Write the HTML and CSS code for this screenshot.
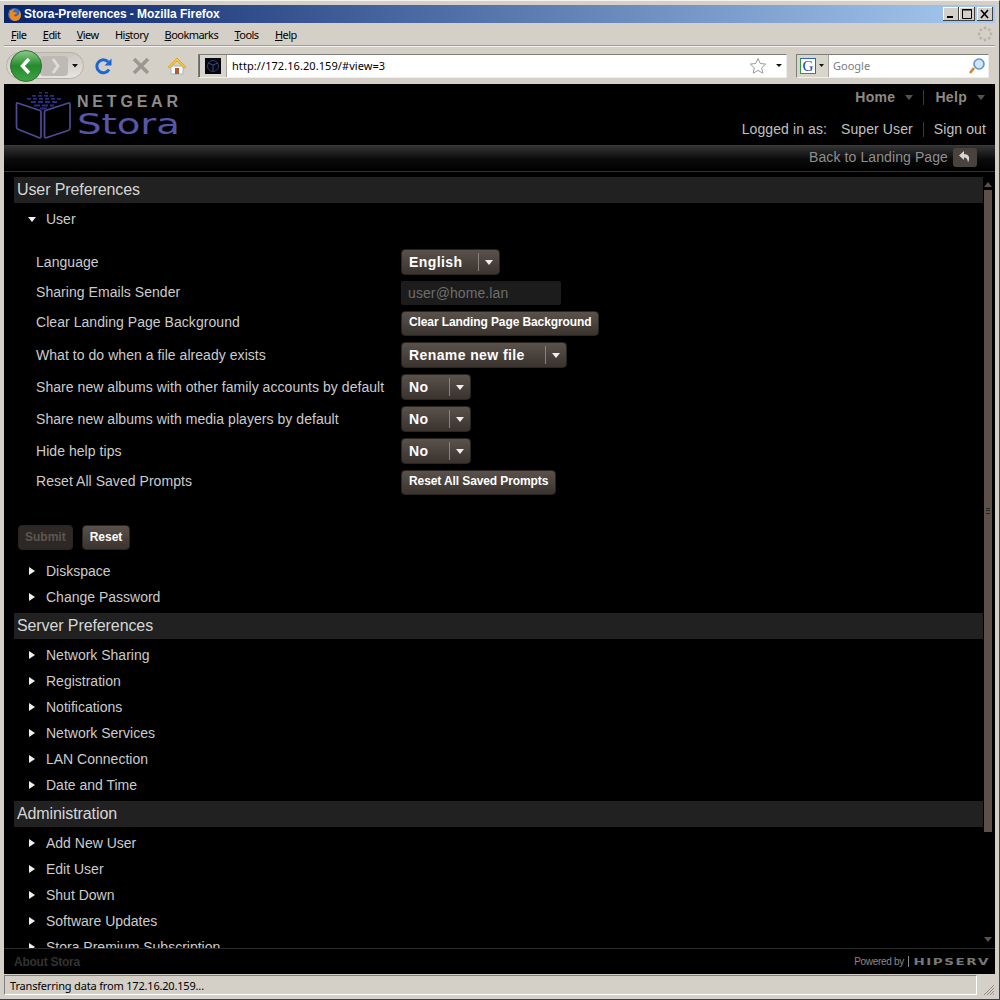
FILE: index.html
```html
<!DOCTYPE html>
<html lang="en">
<head>
<meta charset="utf-8">
<title>Stora-Preferences - Mozilla Firefox</title>
<link rel="stylesheet" href="styles.css">
</head>
<body>
<div class="window">
  <div class="titlebar">
    <svg class="ff-logo" width="16" height="16" viewBox="0 0 16 16"><circle cx="8.500" cy="8.500" r="6.500" fill="#3b6cb4"/><path d="M3 2c0 2 0 3 1 4-2 4 1 9 5 9 4 0 6-3 6-6 0-2-1-4-2-5 1 3 0 5-2 6-2 1-3 0-3-1 1-1 3-1 3-2-1-1-3-1-4-1 0-1 1-2 2-3-2 0-4 1-5 2-1-1-1-2-1-3z" fill="#ee8a1c"/></svg>
    <span class="title-text">Stora-Preferences - Mozilla Firefox</span>
    <div class="win-btns">
      <span class="win-btn"><svg width="16" height="14" viewBox="0 0 16 14"><rect x="4" y="9" width="6" height="2" fill="#000"/></svg></span>
      <span class="win-btn"><svg width="16" height="14" viewBox="0 0 16 14"><path d="M3.500 2.500h9v9h-9z M3 3h10" fill="none" stroke="#000"/></svg></span>
      <span class="win-btn win-close"><svg width="16" height="14" viewBox="0 0 16 14"><path d="M4 3l7 8M11 3l-7 8" stroke="#000" stroke-width="1.600"/></svg></span>
    </div>
  </div>

  <div class="menubar">
    <span class="menu-item"><u>F</u>ile</span>
    <span class="menu-item"><u>E</u>dit</span>
    <span class="menu-item"><u>V</u>iew</span>
    <span class="menu-item">Hi<u>s</u>tory</span>
    <span class="menu-item"><u>B</u>ookmarks</span>
    <span class="menu-item"><u>T</u>ools</span>
    <span class="menu-item"><u>H</u>elp</span>
    <svg class="throbber" width="16" height="16" viewBox="0 0 16 16"><g fill="#b5b2aa"><circle cx="8" cy="2" r="1.400"/><circle cx="12.200" cy="3.800" r="1.400"/><circle cx="14" cy="8" r="1.400"/><circle cx="12.200" cy="12.200" r="1.400"/><circle cx="8" cy="14" r="1.400"/><circle cx="3.800" cy="12.200" r="1.400"/><circle cx="2" cy="8" r="1.400"/><circle cx="3.800" cy="3.800" r="1.400"/></g></svg>
  </div>

  <div class="toolbar">
    <div class="navpill">
      <svg width="78" height="34" viewBox="0 0 78 34">
        <defs>
          <linearGradient id="pill" x1="0" y1="0" x2="0" y2="1"><stop offset="0" stop-color="#c9c6be"/><stop offset="1" stop-color="#e6e4de"/></linearGradient>
          <linearGradient id="green" x1="0" y1="0" x2="0" y2="1"><stop offset="0" stop-color="#8ccc8c"/><stop offset=".5" stop-color="#258a2c"/><stop offset="1" stop-color="#3fa544"/></linearGradient>
        </defs>
        <rect x="0.500" y="3.500" width="77" height="26" rx="13" fill="url(#pill)" stroke="#b4b1a9"/>
        <rect x="34" y="7" width="28" height="20" rx="4" fill="#bdbab3"/>
        <path d="M47 10l5 7-5 7" fill="none" stroke="#dedcd6" stroke-width="3"/>
        <path d="M66 15h6l-3 3.500z" fill="#111"/>
        <circle cx="20" cy="17" r="15.500" fill="url(#green)" stroke="#2f6f33"/>
        <path d="M23 10l-6.500 7 6.500 7" fill="none" stroke="#fff" stroke-width="3.400"/>
      </svg>
    </div>
    <svg class="tool-icon" width="18" height="18" viewBox="0 0 18 18"><path d="M14 12.500a6.500 6.500 0 1 1-.8-7.500" fill="none" stroke="#1b66d6" stroke-width="3"/><path d="M16.500 1.500v7h-7z" fill="#1b66d6"/></svg>
    <svg class="tool-icon" width="18" height="18" viewBox="0 0 18 18"><path d="M2 2l14 14M16 2L2 16" stroke="#9a9892" stroke-width="3.600"/></svg>
    <svg class="tool-icon" width="20" height="20" viewBox="0 0 20 20"><path d="M4 10v8h12v-8z" fill="#fdfdf8" stroke="#9fb4c9"/><path d="M1 11l9-9 9 9-2 1-7-7-7 7z" fill="#f5c53c" stroke="#d89a1e" stroke-width=".7"/><rect x="8" y="12" width="4" height="6" fill="#b05a26"/></svg>
    <div class="urlbar">
      <span class="favicon"><svg width="16" height="16" viewBox="0 0 16 16"><rect width="16" height="16" fill="#05060d"/><circle cx="8" cy="8" r="5.500" fill="none" stroke="#2c3a6e"/><path d="M3 5l5 2 5-2M8 7v6" fill="none" stroke="#3c4a80"/></svg></span>
      <span class="url-text">http://172.16.20.159/#view=3</span>
      <svg class="star" width="18" height="18" viewBox="0 0 18 18"><path d="M9 1.500l2.300 5 5.400.6-4 3.700 1.100 5.400L9 13.400l-4.800 2.800 1.100-5.400-4-3.700 5.400-.6z" fill="#fff" stroke="#9a9a96"/></svg>
      <svg class="drop" width="6" height="4" viewBox="0 0 6 4"><path d="M0 0h6L3 3z" fill="#111"/></svg>
    </div>
    <div class="searchbar">
      <span class="engine"><span class="g-box">G</span><svg width="5" height="3" viewBox="0 0 5 3"><path d="M0 0h5L2.500 3z" fill="#111"/></svg></span>
      <span class="search-text">Google</span>
      <svg class="lens" width="18" height="18" viewBox="0 0 18 18"><path d="M6 11l-4 5" stroke="#d9822b" stroke-width="2.600"/><circle cx="11" cy="7" r="5" fill="#cfe6fa" stroke="#5b94cf" stroke-width="1.600"/></svg>
    </div>
  </div>

  <div class="app">
    <header class="app-head">
      <div class="logo">
        <svg width="56" height="49" viewBox="0 0 56 49">
          <g fill="none" stroke="#4e4b96" stroke-width="1.700" stroke-linejoin="round">
            <path d="M2.500 12L25 19.500c.7.300 1 .8 1 1.500v24.500c0 1-.7 1.500-1.700 1.200L3.500 38.500c-1.300-.5-2-1.400-2-2.800V13c0-.8.400-1.200 1-1z"/>
            <path d="M53.500 12L30.500 19.500c-.7.300-1 .8-1 1.500v24.500c0 1 .7 1.500 1.700 1.200l22-7.200c1.200-.4 1.800-1.300 1.800-2.600V13c0-.8-.5-1.200-1-1z"/>
          </g>
          <g fill="#2f2c80">
            <rect x="24" y="1" width="3" height="1.500"/><rect x="30" y="1" width="3" height="1.500"/>
            <rect x="17" y="4" width="4" height="1.700"/><rect x="23" y="4" width="4" height="1.700"/><rect x="29" y="4" width="4" height="1.700"/><rect x="35" y="4" width="4" height="1.700"/>
            <rect x="12" y="7" width="4" height="1.700"/><rect x="18" y="7" width="4" height="1.700"/><rect x="24" y="7" width="4" height="1.700"/><rect x="30" y="7" width="4" height="1.700"/><rect x="36" y="7" width="4" height="1.700"/><rect x="42" y="7" width="4" height="1.700"/>
            <rect x="16" y="10" width="5" height="2"/><rect x="23" y="10" width="5" height="2"/><rect x="30" y="10" width="5" height="2"/><rect x="37" y="10" width="5" height="2"/>
            <rect x="19" y="13.500" width="6" height="2"/><rect x="27" y="13.500" width="6" height="2"/><rect x="35" y="13.500" width="4" height="2"/>
            <rect x="25" y="16.500" width="7" height="2"/>
          </g>
        </svg>
        <div class="logo-words">
          <span class="netgear">NETGEAR</span>
          <span class="stora">Stora</span>
        </div>
      </div>
      <div class="head-right">
        <nav class="head-nav">
          <span class="nav-link">Home</span><span class="nav-caret"></span>
          <span class="nav-sep"></span>
          <span class="nav-link">Help</span><span class="nav-caret"></span>
        </nav>
        <div class="head-user">
          <span>Logged in as:</span>
          <span class="user-name">Super User</span>
          <span class="user-sep"></span>
          <span>Sign out</span>
        </div>
      </div>
    </header>

    <div class="subbar">
      <span class="back-text">Back to Landing Page</span>
      <span class="back-btn"><svg width="14" height="14" viewBox="0 0 14 14"><path d="M6 1L1 5.500 6 10V7.500c2.500 0 3.500 1.500 4 5C12.500 8 11 4 6 4z" fill="#d8d4cf"/></svg></span>
    </div>

    <div class="main">
      <div class="content">
        <h2 class="section first">User Preferences</h2>
        <div class="tree-row open"><span class="arrow-down"></span>User</div>

        <div class="form">
          <div class="f-label">Language</div>
          <div class="f-ctl"><span class="select sel-english"><span class="sel-val">English</span><span class="sel-drop"></span></span></div>
          <div class="f-label f-up1">Sharing Emails Sender</div>
          <div class="f-ctl"><span class="input">user@home.lan</span></div>
          <div class="f-label f-up2">Clear Landing Page Background</div>
          <div class="f-ctl"><span class="btn">Clear Landing Page Background</span></div>
          <div class="f-label">What to do when a file already exists</div>
          <div class="f-ctl"><span class="select sel-rename"><span class="sel-val">Rename new file</span><span class="sel-drop"></span></span></div>
          <div class="f-label">Share new albums with other family accounts by default</div>
          <div class="f-ctl"><span class="select sel-no"><span class="sel-val">No</span><span class="sel-drop"></span></span></div>
          <div class="f-label">Share new albums with media players by default</div>
          <div class="f-ctl"><span class="select sel-no"><span class="sel-val">No</span><span class="sel-drop"></span></span></div>
          <div class="f-label">Hide help tips</div>
          <div class="f-ctl"><span class="select sel-no"><span class="sel-val">No</span><span class="sel-drop"></span></span></div>
          <div class="f-label f-up2">Reset All Saved Prompts</div>
          <div class="f-ctl"><span class="btn">Reset All Saved Prompts</span></div>
        </div>

        <div class="actions">
          <span class="btn btn-action disabled">Submit</span>
          <span class="btn btn-action btn-reset">Reset</span>
        </div>

        <div class="tree-row"><span class="arrow-right"></span>Diskspace</div>
        <div class="tree-row"><span class="arrow-right"></span>Change Password</div>

        <h2 class="section">Server Preferences</h2>
        <div class="tree-row"><span class="arrow-right"></span>Network Sharing</div>
        <div class="tree-row"><span class="arrow-right"></span>Registration</div>
        <div class="tree-row"><span class="arrow-right"></span>Notifications</div>
        <div class="tree-row"><span class="arrow-right"></span>Network Services</div>
        <div class="tree-row"><span class="arrow-right"></span>LAN Connection</div>
        <div class="tree-row"><span class="arrow-right"></span>Date and Time</div>

        <h2 class="section">Administration</h2>
        <div class="tree-row"><span class="arrow-right"></span>Add New User</div>
        <div class="tree-row"><span class="arrow-right"></span>Edit User</div>
        <div class="tree-row"><span class="arrow-right"></span>Shut Down</div>
        <div class="tree-row"><span class="arrow-right"></span>Software Updates</div>
        <div class="tree-row"><span class="arrow-right"></span>Stora Premium Subscription</div>
      </div>
      <div class="scrollbar">
        <span class="sb-up"></span>
        <div class="sb-thumb"><span class="grip"></span></div>
        <span class="sb-down"></span>
      </div>
    </div>

    <footer class="app-foot">
      <span class="about">About Stora</span>
      <span class="powered">Powered by <span class="pipe"></span><span class="hipserv">HIPSERV</span></span>
    </footer>
  </div>

  <div class="statusbar">
    <div class="status-main">Transferring data from 172.16.20.159...</div>
    <div class="grip-corner">
      <svg width="12" height="12" viewBox="0 0 12 12"><path d="M11 1L1 11M11 4l-7 7M11 7l-4 4M11 10l-1 1" stroke="#8f8d86" stroke-width="1"/></svg>
    </div>
  </div>
</div>
</body>
</html>
```

FILE: styles.css
```css
* { box-sizing: border-box; }
html, body { margin: 0; padding: 0; background: #d4d0c8; }
body { width: 1000px; height: 1000px; overflow: hidden; font-family: "Liberation Sans", Arial, sans-serif; }

.window {
  width: 1000px; height: 1000px;
  display: flex; flex-direction: column;
  padding: 4px 4px 3px;
  background: #d4d0c8;
  border-top: 1px solid #f4f3ef;
  border-bottom: 1px solid #404040;
  border-right: 1px solid #404040;
}

.titlebar {
  height: 18px; flex: none;
  display: flex; align-items: center;
  padding: 0 2px;
  background: linear-gradient(90deg, #0a246a 0%, #a6caf0 100%);
  color: #fff;
  font: bold 12px "Liberation Sans", sans-serif;
  letter-spacing: -0.05px;
}
.title-text { margin-top: -1px; }
.ff-logo { flex: none; margin-right: 2px; }
.win-btns { margin-left: auto; display: flex; gap: 0; }
.win-btn { width: 16px; height: 14px; background: #d4d0c8; box-shadow: inset -1px -1px #404040, inset 1px 1px #fff; display: block; }
.win-close { margin-left: 2px; }
.win-btn svg { display: block; }

.menubar {
  height: 23px; flex: none;
  display: flex; align-items: center;
  padding: 0 0 0 7px; gap: 16.400px;
  font: 11px "Noto Sans", sans-serif;
  letter-spacing: -0.55px;
  color: #000;
  border-bottom: 1px solid #a09d95;
}
.throbber { margin-left: auto; margin-right: 2px; }

.toolbar {
  height: 38px; flex: none;
  display: flex; align-items: center;
  padding-left: 2px;
  border-top: 1px solid #f4f3ef;
}
.navpill { width: 80px; height: 34px; flex: none; }
.navpill svg { display: block; }
.tool-icon { flex: none; }
.toolbar .tool-icon:nth-child(2) { margin-left: 9px; margin-right: 10px; }
.toolbar .tool-icon:nth-child(3) { margin-left: 9px; margin-right: 10px; }
.toolbar .tool-icon:nth-child(4) { margin-left: 7px; margin-right: 11px; }

.urlbar {
  width: 589px; height: 24px; flex: none;
  display: flex; align-items: center;
  background: #fff;
  border: 1px solid #7f7d78;
  border-right-color: #eee; border-bottom-color: #eee;
}
.favicon { width: 28px; height: 22px; display: flex; align-items: center; justify-content: center; background: #d8d5cd; border-right: 1px solid #a5a39c; box-shadow: inset 1px 0 #666; }
.url-text { margin-left: 5px; font: 11px "Noto Sans", sans-serif; letter-spacing: .07px; color: #000; }
.star { margin-left: auto; margin-right: 9px; }
.drop { margin-right: 4px; }

.searchbar {
  width: 193px; height: 24px; flex: none;
  margin-left: 9px;
  display: flex; align-items: center;
  background: #fff;
  border: 1px solid #7f7d78;
  border-right-color: #eee; border-bottom-color: #eee;
}
.engine { width: 32px; height: 22px; display: flex; align-items: center; gap: 3px; padding-left: 3px; background: #d8d5cd; border-right: 1px solid #a5a39c; }
.g-box { width: 16px; height: 16px; display: block; background: #fff; border: 1px solid; border-color: #2a62c0 #c8322a #2f9a3a #2f9a3a; color: #1c40b0; font: 15px/14px "Liberation Serif", serif; text-align: center; }
.engine svg { flex: none; }
.search-text { margin-left: 4px; font: 11px "Noto Sans", sans-serif; color: #7c7c7c; }
.lens { margin-left: auto; margin-right: 2px; }

.app { flex: 1; min-height: 0; display: flex; flex-direction: column; background: #000; color: #ccc; }

.app-head { height: 60px; flex: none; display: flex; justify-content: space-between; }
.logo { display: flex; margin: 7px 0 0 11px; gap: 6px; }
.logo svg { display: block; }
.logo-words { display: flex; flex-direction: column; align-items: flex-start; }
.netgear { font: bold 16px/14px "Liberation Sans", sans-serif; letter-spacing: 3.800px; color: #8c8c8c; margin-top: 4px; }
.stora { font: 28px/26px "DejaVu Sans", sans-serif; color: #5856a8; margin-top: 3px; transform: scaleX(1.380); transform-origin: left center; }

.head-right { display: flex; flex-direction: column; align-items: flex-end; padding-right: 9px; }
.head-nav { display: flex; align-items: center; height: 20px; margin-top: 3px; padding-right: 1px; color: #8f8a84; font: bold 14px "Liberation Sans", sans-serif; letter-spacing: .3px; }
.nav-caret { width: 0; height: 0; margin-left: 10px; border: 4.500px solid transparent; border-top: 5px solid #5a534d; border-bottom: 0; }
.nav-sep { width: 1px; height: 15px; margin: 0 11px 0 10px; background: #3a3a3a; }
.head-user { display: flex; align-items: center; height: 20px; margin-top: 12px; font-size: 14px; letter-spacing: .1px; color: #c0c0c0; }
.user-name { margin-left: 14px; }
.user-sep { width: 1px; height: 15px; margin: 0 10px; background: #3a3a3a; }

.subbar {
  height: 27px; flex: none;
  display: flex; align-items: center; justify-content: flex-end;
  padding: 0 18px 3px 0;
  border-top: 1px solid #3a3a3a;
  border-bottom: 1px solid #333;
  background: linear-gradient(#333 0%, #0a0a0a 55%, #000 100%);
  color: #8f8f8f; font-size: 14px; letter-spacing: .1px;
  margin-top: 1px;
}
.back-btn { width: 24px; height: 19px; margin-left: 5px; border-radius: 3px; background: #4a423c; display: flex; align-items: center; justify-content: center; }

.main { flex: 1; min-height: 0; display: flex; overflow: hidden; padding-top: 5px; }
.content { width: 979px; flex: none; padding-left: 10px; overflow: hidden; }

.section { margin: 3px 0; height: 26px; background: #212121; color: #d6d6d6; font-weight: normal; font-size: 16px; line-height: 25px; padding-left: 3px; letter-spacing: -.1px; }
.section.first { margin-top: 0; }
.tree-row { height: 26px; display: flex; align-items: center; padding-left: 14px; font-size: 14px; letter-spacing: 0; color: #ccc; }
.arrow-right { width: 0; height: 0; border: 4.500px solid transparent; border-left: 6px solid #f0f0f0; border-right: 0; margin-right: 11px; margin-left: 1px; }
.arrow-down { width: 0; height: 0; border: 4.500px solid transparent; border-top: 5px solid #f0f0f0; border-bottom: 0; margin-right: 10px; margin-left: 0; }

.form {
  margin-top: 17px;
  display: grid;
  grid-template-columns: 365px auto;
  row-gap: 6px;
  padding-left: 22px;
}
.f-label { display: flex; align-items: center; font-size: 14px; letter-spacing: .05px; color: #ccc; white-space: nowrap; }
.f-up1 { padding-bottom: 2px; }
.f-up2 { padding-bottom: 3px; }
.f-ctl { display: flex; align-items: center; }

.select {
  height: 26px; display: flex; align-items: center;
  border-radius: 4px;
  background: linear-gradient(#5a514b, #3a332e);
  border: 1px solid #2a2522;
  color: #fff; font-weight: bold; font-size: 14px; letter-spacing: .4px;
}
.sel-val { flex: 1; padding-left: 7px; }
.sel-drop { width: 21px; height: 18px; flex: none; border-left: 1px solid #8a817a; display: flex; align-items: center; justify-content: center; }
.sel-drop::after { content: ""; width: 0; height: 0; border: 4px solid transparent; border-top: 5px solid #eee; border-bottom: 0; }
.sel-english { width: 99px; }
.sel-rename { width: 166px; }
.sel-no { width: 70px; }

.input { width: 160px; height: 24px; display: flex; align-items: center; padding-left: 7px; padding-bottom: 1px; background: #1c1c1c; border-radius: 2px; color: #6e6e6e; font-size: 14px; letter-spacing: .1px; }

.btn {
  height: 25px; display: inline-flex; align-items: center; padding: 0 7px 3px;
  border-radius: 4px;
  background: linear-gradient(#5a514b, #3a332e);
  border: 1px solid #2a2522;
  color: #fff; font-weight: bold; font-size: 12px; letter-spacing: -.1px; white-space: nowrap;
}
.actions { display: flex; gap: 9px; margin: 30px 0 0 4px; height: 33px; }
.btn-action { height: 25px; padding: 0 6px 2px; letter-spacing: 0; }
.btn-reset { padding: 0 7px 2px; }
.disabled { color: #5e5650; background: #2d2825; }

.scrollbar { width: 10px; flex: none; display: flex; flex-direction: column; align-items: center; padding-top: 5px; }
.sb-up { width: 0; height: 0; border: 4.500px solid transparent; border-bottom: 5px solid #5c5048; border-top: 0; flex: none; }
.sb-thumb { width: 8px; height: 642px; margin-top: 3px; background: #5c5048; display: flex; align-items: center; justify-content: center; flex: none; }
.grip { width: 4px; height: 6px; border-top: 1px solid #222; border-bottom: 1px solid #222; background: linear-gradient(#5c5048 35%, #222 35%, #222 60%, #5c5048 60%); }
.sb-down { width: 0; height: 0; border: 4.500px solid transparent; border-top: 5px solid #5c5048; border-bottom: 0; margin-top: 105px; flex: none; }

.app-foot { height: 26px; flex: none; display: flex; align-items: center; justify-content: space-between; border-top: 1px solid #2a2a2a; padding: 0 5px 0 10px; }
.about { color: #333; font-weight: bold; font-size: 12px; letter-spacing: -.25px; }
.powered { display: flex; align-items: center; font-size: 10px; letter-spacing: -.3px; color: #8a8a8a; }
.pipe { width: 1px; height: 11px; background: #8a8a8a; margin: 0 4px 0 4px; }
.hipserv { font: bold 9px "DejaVu Sans", sans-serif; letter-spacing: 1px; color: #777; margin-left: 26px; transform: scaleX(1.500); transform-origin: right center; }

.statusbar { height: 22px; flex: none; display: flex; padding-top: 1px; }
.status-main { width: 973px; height: 20px; padding-left: 5px; font: 11px/20px "Noto Sans", sans-serif; letter-spacing: -.18px; color: #000; border: 1px solid; border-color: #808080 #fff #fff #808080; }
.grip-corner { flex: 1; display: flex; align-items: flex-end; justify-content: flex-end; }
.grip-corner svg { display: block; }
```
